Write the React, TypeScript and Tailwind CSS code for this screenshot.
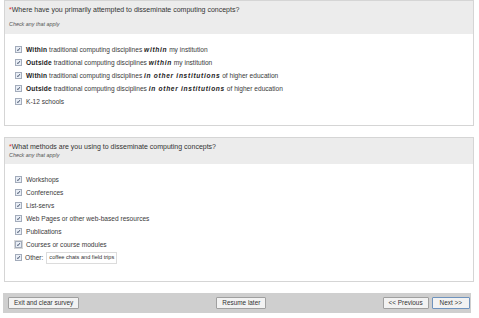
import React from "react";

type Part = { t: string; b?: boolean; bi?: boolean };

const whereItems: Part[][] = [
  [{ t: "Within", b: true }, { t: " traditional computing disciplines " }, { t: "within", bi: true }, { t: " my institution" }],
  [{ t: "Outside", b: true }, { t: " traditional computing disciplines " }, { t: "within", bi: true }, { t: " my institution" }],
  [{ t: "Within", b: true }, { t: " traditional computing disciplines " }, { t: "in other institutions", bi: true }, { t: " of higher education" }],
  [{ t: "Outside", b: true }, { t: " traditional computing disciplines " }, { t: "in other institutions", bi: true }, { t: " of higher education" }],
  [{ t: "K-12 schools" }],
];

const methods = [
  "Workshops",
  "Conferences",
  "List-servs",
  "Web Pages or other web-based resources",
  "Publications",
  "Courses or course modules",
];

function Check({ hover }: { hover?: boolean }) {
  return (
    <span
      className={
        hover
          ? "-mx-[1px] flex h-[9px] w-[9px] items-center justify-center bg-[#d6d6d6]"
          : "flex h-[9px] w-[7px] items-center justify-center"
      }
    >
      <svg width="7" height="7" viewBox="0 0 7 7">
        <rect x="0.5" y="0.5" width="6" height="6" fill="#e9eef6" stroke="#a3acbb" />
        <path d="M2.2 3.9 L3 4.7 L4.8 2.2" stroke="#2f3d58" strokeWidth="0.9" fill="none" />
      </svg>
    </span>
  );
}

function Header({ title, big }: { title: string; big?: boolean }) {
  return (
    <div
      className={
        big
          ? "h-[33px] bg-[#ececec] pl-[4px] pt-[4px]"
          : "h-[26px] bg-[#ececec] pl-[4px] pt-[4px]"
      }
    >
      <div className="text-[7px] leading-[10px] text-[#333]">
        <span className="text-[#e03030]">*</span>
        {title}
      </div>
      <div
        className={
          big
            ? "mt-[6px] text-[5.4px] italic leading-[6px] text-[#555]"
            : "mt-[0px] text-[5.4px] italic leading-[6px] text-[#555]"
        }
      >
        Check any that apply
      </div>
    </div>
  );
}

function Btn({ label, primary }: { label: string; primary?: boolean }) {
  return (
    <div
      className={
        primary
          ? "flex h-[12px] items-center rounded-[1px] border border-[#6f93bd] bg-[#f2f2f2] px-[7px] text-[6.4px] text-[#333]"
          : "flex h-[12px] items-center rounded-[1px] border border-[#a0a0a0] bg-[#f2f2f2] px-[5px] text-[6.4px] text-[#333]"
      }
    >
      {label}
    </div>
  );
}

export default function App() {
  return (
    <div className="h-[318px] w-[479px] bg-white font-['Liberation_Sans',Arial,sans-serif]">
      <div className="flex flex-col pl-[4px] pr-[5px]">
        <div className="h-[126px] border border-[#d5d5d5]">
          <Header big title="Where have you primarily attempted to disseminate computing concepts?" />
          <div className="flex flex-col gap-[4px] pl-[10px] pt-[11px]">
            {whereItems.map((parts, i) => (
              <div key={i} className="flex h-[9px] items-center gap-[4px] text-[6.6px] text-[#3a3a3a]">
                <Check />
                <span>
                  {parts.map((p, j) => (
                    <span
                      key={j}
                      className={
                        p.b
                          ? "font-bold tracking-[0.2px] text-[#222]"
                          : p.bi
                          ? "font-bold italic tracking-[0.7px] text-[#222]"
                          : ""
                      }
                    >
                      {p.t}
                    </span>
                  ))}
                </span>
              </div>
            ))}
          </div>
        </div>
        <div className="mt-[11px] h-[145px] border border-[#d5d5d5]">
          <Header title="What methods are you using to disseminate computing concepts?" />
          <div className="flex flex-col gap-[4px] pl-[10px] pt-[11px]">
            {methods.map((m, i) => (
              <div key={m} className="flex h-[9px] items-center gap-[4px] text-[6.6px] text-[#3a3a3a]">
                <Check hover={i === 5} />
                <span>{m}</span>
              </div>
            ))}
            <div className="flex h-[9px] items-center gap-[4px] text-[6.6px] text-[#3a3a3a]">
              <Check />
              <span className="-ml-[1px]">Other:</span>
              <div className="-ml-[1px] flex h-[12px] items-center border border-[#dcdcdc] px-[2px] text-[5.6px] text-[#333]">
                coffee chats and field trips
              </div>
            </div>
          </div>
        </div>
      </div>
      <div className="ml-[3px] mr-[8px] mt-[11px] flex h-[20px] items-center bg-[#cfcfcf] pl-[5px] pr-[1px]">
        <Btn label="Exit and clear survey" />
        <div className="ml-[137px]">
          <Btn label="Resume later" />
        </div>
        <div className="ml-auto flex gap-[3px]">
          <Btn label="<< Previous" />
          <Btn primary label="Next >>" />
        </div>
      </div>
    </div>
  );
}
